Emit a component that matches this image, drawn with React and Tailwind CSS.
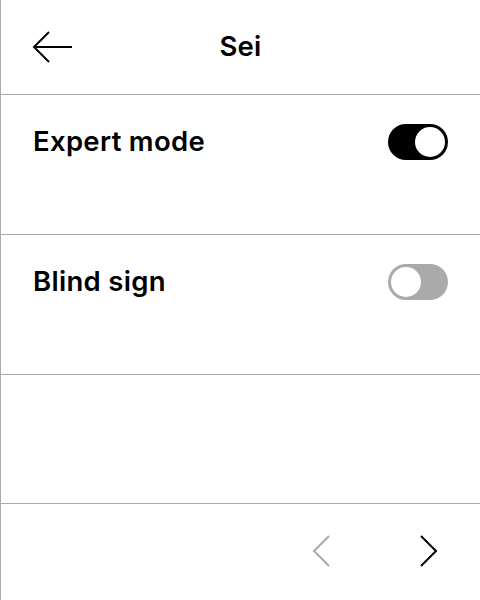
import React from "react";

function Toggle({ on }) {
  return (
    <div
      className={
        "w-[60px] h-[36px] rounded-full flex items-center px-[3px] " +
        (on ? "bg-black justify-end" : "bg-[#aaaaaa] justify-start")
      }
    >
      <div className="w-[30px] h-[30px] rounded-full bg-white" />
    </div>
  );
}

function Row({ label, on }) {
  return (
    <div className="h-[140px] border-b border-[#aaaaaa] flex items-start justify-between pl-8 pr-8 pt-[29px]">
      <span className="text-[27.5px] leading-[26px] font-semibold tracking-[0.3px] text-black mt-[4px]">{label}</span>
      <Toggle on={on} />
    </div>
  );
}

export default function App() {
  return (
    <div
      className="w-[480px] h-[600px] bg-white border-l border-[#aaaaaa] flex flex-col overflow-hidden"
      style={{ fontFamily: "Inter, 'Noto Sans', sans-serif" }}
    >
      <div className="h-[95px] border-b border-[#aaaaaa] relative flex items-center justify-center">
        <svg
          className="absolute left-[31px] top-[31px]"
          width="42"
          height="34"
          viewBox="0 0 42 34"
          fill="none"
          stroke="black"
          strokeWidth="2"
        >
          <path d="M2 16 H40" />
          <path d="M17 1 L2 16 L17 31" />
        </svg>
        <span className="text-[27.5px] font-semibold tracking-[0.3px] text-black leading-none">Sei</span>
      </div>
      <Row label="Expert mode" on={true} />
      <Row label="Blind sign" on={false} />
      <div className="h-[129px] border-b border-[#aaaaaa]" />
      <div className="flex-1 flex items-center justify-end pr-[42px] gap-[86px] pb-[2px]">
        <svg width="20" height="32" viewBox="0 0 20 32" fill="none" stroke="#aaaaaa" strokeWidth="2">
          <path d="M17 1 L2 16 L17 31" />
        </svg>
        <svg width="20" height="32" viewBox="0 0 20 32" fill="none" stroke="black" strokeWidth="2">
          <path d="M3 1 L18 16 L3 31" />
        </svg>
      </div>
    </div>
  );
}
